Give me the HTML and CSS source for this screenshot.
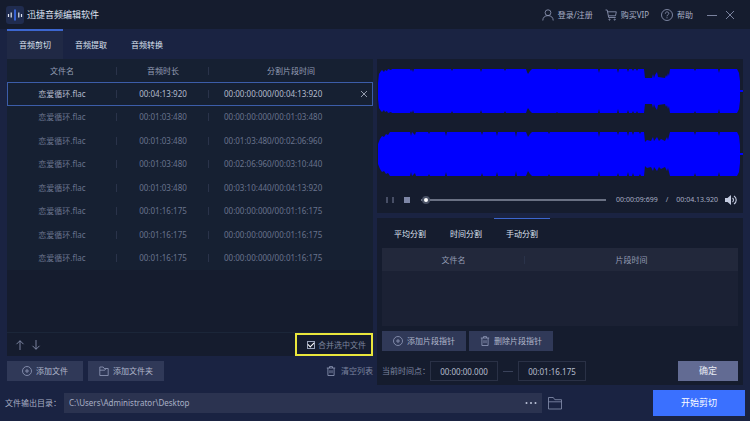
FILE: index.html
```html
<!DOCTYPE html>
<html lang="zh-CN">
<head>
<meta charset="utf-8">
<title>迅捷音频编辑软件</title>
<link rel="stylesheet" href="styles.css">
</head>
<body>
<header class="titlebar">
  <svg class="logo" viewBox="0 0 18 18"><rect width="18" height="18" rx="3" fill="#202c4f"/><path d="M2.500 8v3M5.200 6.500v5M12.800 6.500v5M15.500 8v3" stroke="#e2e6f2" stroke-width="1.200"/><path d="M9 3.500v11" stroke="#3f74ff" stroke-width="1.500"/></svg>
  <h1 class="title">迅捷音频编辑软件</h1>
  <nav class="account">
    <a href="#" class="account-link"><svg class="icon-l" viewBox="0 0 12 12"><circle cx="6" cy="3.700" r="2.900"/><path d="M.8 11.500c0-3 2-4.900 5.200-4.900s5.200 1.900 5.200 4.900"/></svg>登录/注册</a>
    <a href="#" class="account-link cart"><svg class="icon-l" viewBox="0 0 12 12"><path d="M.5 1h1.700l1.500 7.500h7M2.500 2.800h8.800l-.8 4H3.400"/><circle cx="4.500" cy="10.600" r=".6"/><circle cx="9.700" cy="10.600" r=".6"/></svg>购买VIP</a>
    <a href="#" class="account-link"><svg class="icon-l" viewBox="0 0 12 12"><circle cx="6" cy="6" r="5.500"/><path d="M4.300 4.700c0-2.400 3.500-2.300 3.500-.2C7.800 5.800 6 5.700 6 7.300M6 8.300v1"/></svg>帮助</a>
  </nav>
  <button class="win" aria-label="最小化"><svg class="icon" viewBox="0 0 10 10"><path d="M0 5.500h10"/></svg></button>
  <button class="win" aria-label="关闭"><svg class="icon" viewBox="0 0 10 10"><path d="M1 1l8 8M9 1L1 9"/></svg></button>
</header>

<nav class="tabs main-tabs">
  <button class="tab active">音频剪切</button>
  <button class="tab">音频提取</button>
  <button class="tab">音频转换</button>
</nav>

<main class="workspace">
  <section class="column">
    <div class="panel files">
      <div class="files-body">
        <table class="file-table">
          <colgroup><col class="col-name"><col class="col-length"><col><col class="col-remove"></colgroup>
          <thead><tr><th>文件名</th><th>音频时长</th><th colspan="2">分割片段时间</th></tr></thead>
          <tbody>
            <tr class="selected"><td>恋爱循环.flac</td><td>00:04:13:920</td><td>00:00:00:000/00:04:13:920</td><td><button class="remove" aria-label="移除"><svg viewBox="0 0 6 6"><path d="M0 0l6 6M6 0L0 6"/></svg></button></td></tr>
            <tr><td>恋爱循环.flac</td><td>00:01:03:480</td><td>00:00:00:000/00:01:03:480</td><td></td></tr>
            <tr><td>恋爱循环.flac</td><td>00:01:03:480</td><td>00:01:03:480/00:02:06:960</td><td></td></tr>
            <tr><td>恋爱循环.flac</td><td>00:01:03:480</td><td>00:02:06:960/00:03:10:440</td><td></td></tr>
            <tr><td>恋爱循环.flac</td><td>00:01:03:480</td><td>00:03:10:440/00:04:13:920</td><td></td></tr>
            <tr><td>恋爱循环.flac</td><td>00:01:16:175</td><td>00:00:00:000/00:01:16:175</td><td></td></tr>
            <tr><td>恋爱循环.flac</td><td>00:01:16:175</td><td>00:00:00:000/00:01:16:175</td><td></td></tr>
            <tr><td>恋爱循环.flac</td><td>00:01:16:175</td><td>00:00:00:000/00:01:16:175</td><td></td></tr>
          </tbody>
        </table>
      </div>
      <div class="files-foot">
        <button class="move" aria-label="上移"><svg class="icon" viewBox="0 0 10 10"><path d="M5 10V.8M1.500 4.200L5 .7l3.500 3.500"/></svg></button>
        <button class="move" aria-label="下移"><svg class="icon" viewBox="0 0 10 10"><path d="M5 0v9.200M1.500 5.800L5 9.300l3.500-3.500"/></svg></button>
        <label class="merge"><input type="checkbox" checked>合并选中文件</label>
      </div>
    </div>
    <div class="toolbar">
      <button class="btn btn-file"><svg class="icon" viewBox="0 0 10 10"><circle cx="5" cy="5" r="4.500"/><path d="M5 3v4M3 5h4"/></svg>添加文件</button>
      <button class="btn btn-file"><svg class="icon" viewBox="0 0 10 10"><path d="M.8 9.500V1h3.400l1 1.500h4v7zM.8 4.200h5L7 2.500"/></svg>添加文件夹</button>
      <button class="clear"><svg class="icon" viewBox="0 0 10 10"><path d="M.8 2h8.400M3.500 2V.6h3V2M1.900 2v7.500h6.200V2M4 4.200v3M6 4.200v3"/></svg>清空列表</button>
    </div>
  </section>

  <section class="column right">
    <div class="panel player">
      <svg class="wave" viewBox="0 0 366 122" preserveAspectRatio="none">
        <defs>
          <path id="left-channel" d="M1 0V-8L2-17 4-20 5-21 7-19 8-21 10-20 11-22 14-21 15-22H33L34-20 35-22 36-19 37-22H74L75-20 76-22H103L104-19 105-22H127L128-20 129-22H149L150-19 151-17 153-20 155-22H179L180-21 181-22H221L222-18 223-22H240L241-18 242-22H250L251-19 252-22H255L256-20 257-22H259L260-20 261-22H267L268-13 275-13 276-17 277-13 278-16 280-19 281-14 288-13 289-16 290-14 291-18 292-15 293-22H317L318-20 319-22H341L342-18 343-22H360L362-18 363-10 363-1H366V0z"/>
          <path id="right-channel" d="M1 0V-10L3-15 5-18 7-17 9-20 11-19 13-22H33L34-18 35-22 38-19 39-22H51L52-20 53-22H68L69-18 70-22H104L105-19 106-22H119L120-18 121-22H138L139-17 140-22H149L151-17 153-20 155-22H171L172-20 173-22H221L222-17 223-22H240L241-19 242-22H250L251-18 252-22H255L256-19 257-22H262L263-20 264-22H267L268-12 270-14 274-13 276-17 277-13 280-17 282-13 284-15 288-13 290-17 291-14 292-18 293-22H317L318-19 319-22H341L342-18 343-22H360L362-18 363-9 363-1H366V0z"/>
        </defs>
        <g fill="#0000ff">
          <g transform="translate(0 32)"><use href="#left-channel"/><use href="#left-channel" transform="scale(1 -1)"/></g>
          <g transform="translate(0 95)"><use href="#right-channel"/><use href="#right-channel" transform="scale(1 -1)"/></g>
        </g>
      </svg>
      <div class="controls">
        <button aria-label="暂停"><svg class="icon-s" viewBox="0 0 8 8"><path d="M1 1v6M7 1v6"/></svg></button>
        <button class="stop" aria-label="停止"><svg class="icon-s" viewBox="0 0 8 8"><path d="M1 1h6v6H1z" fill="#7d86a6" stroke="none"/></svg></button>
        <input class="seek" type="range" min="0" max="254" value="2" aria-label="播放进度">
        <span class="time">00:00:09:699</span><span class="time slash">/</span><span class="time">00:04.13.920</span>
        <button class="volume" aria-label="音量"><svg class="icon-l" viewBox="0 0 12 12"><path d="M0 4h2.500L6 1v10L2.500 8H0z" fill="#c4cbe0" stroke="none"/><path d="M7.500 4c1.300 1 1.300 3 0 4M9 2c3 2 3 6 0 8" stroke="#c4cbe0" stroke-width="1.100"/></svg></button>
      </div>
    </div>

    <div class="panel splitter">
      <nav class="tabs">
        <button class="tab">平均分割</button>
        <button class="tab">时间分割</button>
        <button class="tab active">手动分割</button>
      </nav>
      <div class="segments">
        <table class="segment-table">
          <colgroup><col class="col-segment"><col></colgroup>
          <thead><tr><th>文件名</th><th>片段时间</th></tr></thead>
        </table>
      </div>
      <div class="pointers">
        <button class="btn btn-pointer"><svg class="icon" viewBox="0 0 10 10"><circle cx="5" cy="5" r="4.500"/><path d="M5 3v4M3 5h4"/></svg>添加片段指针</button>
        <button class="btn btn-pointer"><svg class="icon" viewBox="0 0 10 10"><path d="M.8 2h8.400M3.500 2V.6h3V2M1.900 2v7.500h6.200V2M4 4.200v3M6 4.200v3"/></svg>删除片段指针</button>
      </div>
      <div class="range">
        <label for="from">当前时间点：</label>
        <input id="from" class="timebox" type="text" value="00:00:00.000">
        <span class="dash"></span>
        <input class="timebox" type="text" value="00:01:16.175" aria-label="结束时间点">
        <button class="btn confirm">确定</button>
      </div>
    </div>
  </section>
</main>

<footer class="output">
  <label for="path">文件输出目录：</label>
  <div class="path">
    <input id="path" type="text" value="C:\Users\Administrator\Desktop">
    <button class="more" aria-label="浏览"><svg viewBox="0 0 12 4"><circle cx="1.500" cy="2" r="1"/><circle cx="6" cy="2" r="1"/><circle cx="10.500" cy="2" r="1"/></svg></button>
  </div>
  <button class="open" aria-label="打开文件夹"><svg viewBox="0 0 14 14"><path d="M.5 13V1.500h4.800l1.500 2.200h6.700V13zM.5 5.800h13"/></svg></button>
  <button class="start">开始剪切</button>
</footer>
</body>
</html>
```
FILE: styles.css
```css
* { box-sizing: border-box; }

body {
  margin: 0;
  min-height: 100vh;
  display: flex;
  flex-direction: column;
  background: #1a2342;
  color: #a7aec4;
  font: 8px/12px "Noto Sans", "Noto Sans CJK SC", sans-serif;
}

button, input {
  font: inherit;
  color: inherit;
  margin: 0;
  padding: 0;
  border: 0;
  background: none;
}

button {
  display: flex;
  align-items: center;
  justify-content: center;
  white-space: nowrap;
}

svg {
  display: block;
  flex: none;
  fill: none;
  stroke: #949dbb;
  stroke-width: 0.8;
}

svg.logo, svg.wave { stroke: none; }

.icon { width: 10px; height: 10px; }
.icon-l { width: 12px; height: 12px; }
.icon-s { width: 8px; height: 8px; }

/* Title bar */
.titlebar {
  height: 29px;
  display: flex;
  align-items: center;
  padding: 0 15px 0 6px;
  background: #151c2e;
}

.logo { width: 18px; height: 18px; }

.title {
  margin: 0 auto 0 3px;
  font-size: 9px;
  font-weight: 400;
  color: #dfe4f2;
}

.account {
  display: flex;
  gap: 12px;
  margin-right: 14px;
}

.account-link {
  display: flex;
  align-items: center;
  gap: 4px;
  color: #a7aec4;
  text-decoration: none;
}

.win + .win { margin-left: 8px; }

/* Tabs */
.tabs { display: flex; }

.main-tabs {
  height: 30px;
  padding: 0 7px;
}

.tab {
  width: 56px;
  border-top: 1px solid transparent;
  color: #dde2f0;
}

.tab.active { border-top-color: #3c66cf; }

.main-tabs .tab { border-top-width: 2px; }

.main-tabs .active { background: #202945; }

/* Workspace */
.workspace {
  flex: 1;
  display: grid;
  grid-template-columns: 1fr 1fr;
  gap: 4px;
  padding: 0 7px;
}

.column {
  display: flex;
  flex-direction: column;
  min-width: 0;
}

.right { gap: 5px; }

.panel { background: #151c2e; }

.files {
  flex: 1;
  display: flex;
  flex-direction: column;
}

.files-body {
  flex: 1;
  border-bottom: 1px solid #1b2639;
}

table {
  width: 100%;
  table-layout: fixed;
  border-collapse: collapse;
}

th, td {
  height: 23px;
  padding: 0;
  font-weight: 400;
  text-align: center;
  white-space: nowrap;
}

th:not(:last-child), td:nth-child(-n+2) {
  background: linear-gradient(#2a334a, #2a334a) right center / 1px 8px no-repeat;
}

.file-table {
  height: 211px;
  background: #162032;
  color: #69738d;
}

.file-table th { color: #949db4; }

.file-table td:nth-child(3) {
  padding-left: 15px;
  text-align: left;
}

.col-name { width: 110px; }
.col-length { width: 92px; }
.col-remove { width: 18px; }

.selected {
  color: #b4bbcd;
  outline: 1px solid #3c5da9;
  outline-offset: -1px;
}

.remove { margin: 0 auto; }
.remove svg { width: 6px; height: 6px; stroke: #b4bbcd; }

.files-foot {
  display: flex;
  align-items: center;
  height: 23px;
  padding-left: 8px;
  gap: 6px;
}

.merge {
  display: flex;
  align-items: center;
  gap: 3px;
  height: 23px;
  margin-left: auto;
  padding: 0 5px 0 10px;
  border: 2px solid #e9e63c;
  color: #7b849d;
}

.merge input {
  appearance: none;
  width: 8px;
  height: 8px;
  border: 1px solid #99a2b9;
}

.merge input:checked::after {
  content: "";
  display: block;
  width: 5px;
  height: 3px;
  border: solid #ffffff;
  border-width: 0 0 1px 1px;
  transform: rotate(-45deg);
}

.toolbar {
  display: flex;
  gap: 5px;
  padding: 5px 0 4px;
}

.btn {
  height: 20px;
  gap: 4px;
  background: #303958;
  color: #b0b7cb;
}

.btn-file { width: 76px; }
.btn-pointer { width: 84px; }

.clear {
  gap: 5px;
  margin-left: auto;
  color: #7b849f;
}

/* Player */
.wave { width: 100%; height: 122px; }

.controls {
  display: flex;
  align-items: center;
  height: 32px;
  padding: 6px 6px 0 9px;
}

.stop { margin: 0 10px 0 9px; }

.seek {
  appearance: none;
  flex: 1;
  min-width: 0;
  height: 8px;
  margin-right: 10px;
}

.seek::-webkit-slider-runnable-track {
  height: 2px;
  background: #697083;
}

.seek::-webkit-slider-thumb {
  appearance: none;
  width: 8px;
  height: 8px;
  margin-top: -3px;
  border: 2px solid #4a5266;
  border-radius: 50%;
  background: #ffffff;
}

.time { font-size: 7px; }
.slash { margin: 0 8px; }
.volume { margin-left: 7px; }

/* Splitter */
.splitter {
  flex: 1;
  padding: 0 5px 4px;
}

.splitter .tabs { height: 30px; }

.segments {
  height: 78px;
  background: #1b2134;
}

.segment-table { background: #22283b; }
.segment-table th { color: #949db4; }
.col-segment { width: 143px; }

.pointers {
  display: flex;
  gap: 3px;
  padding: 5px 0 10px;
}

.range {
  display: flex;
  align-items: center;
  color: #7e87a0;
}

.timebox {
  width: 68px;
  height: 20px;
  border: 1px solid #2a3146;
  color: #b5bccd;
  text-align: center;
}

.dash {
  width: 10px;
  height: 1px;
  margin: 0 5px;
  background: #3a425a;
}

.confirm {
  width: 60px;
  margin-left: auto;
  background: #626b93;
  color: #e8ebf5;
  font-size: 9px;
}

/* Output bar */
.output {
  display: flex;
  align-items: center;
  height: 36px;
  padding: 0 5px;
}

.path {
  flex: 1;
  display: flex;
  align-items: center;
  height: 20px;
  margin-left: 3px;
  padding: 0 5px;
  background: #2b3350;
}

.path input {
  flex: 1;
  min-width: 0;
}

.more svg {
  width: 12px;
  height: 4px;
  fill: #bdc4d8;
  stroke: none;
}

.open { margin: 0 91px 0 6px; }
.open svg { width: 14px; height: 14px; stroke: #8992b0; }

.start {
  width: 92px;
  height: 26px;
  background: #3a70ff;
  color: #ffffff;
  font-size: 9px;
}
```
